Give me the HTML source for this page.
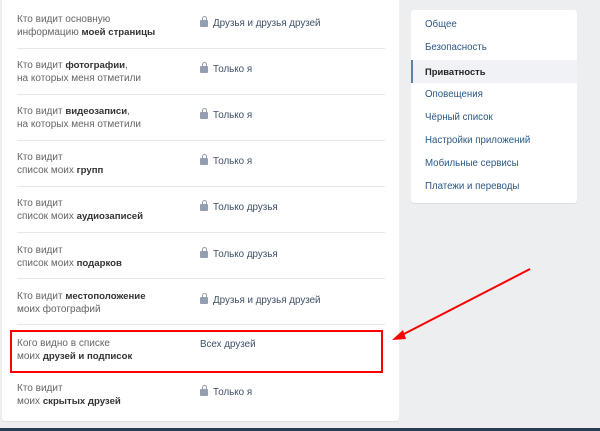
<!DOCTYPE html>
<html><head><meta charset="utf-8"><style>
*{margin:0;padding:0;box-sizing:border-box}
body{width:600px;height:431px;background:#edeef0;font-family:"Liberation Sans",Arial,sans-serif;font-size:10px;position:relative;overflow:hidden}
.card{position:absolute;left:2px;top:-5px;width:397px;height:426px;background:#fff;border-radius:0 0 3px 3px;box-shadow:0 1px 0 #dcdee2}
.row{position:absolute;left:17px;width:368px;height:46px}
.sep{position:absolute;left:17px;width:368px;height:1px;background:#e7e8ec}
.lab{position:absolute;left:0;top:7px;color:#656565;line-height:12.5px;font-size:10px}
.lab b{color:#333;font-weight:bold;font-size:9.6px}
.val{position:absolute;left:183px;top:11px;color:#3d4f66;white-space:nowrap;font-size:9.8px}
.lock{display:inline-block;width:8px;height:7px;background:#939eb0;border-radius:1px;position:relative;margin-right:5px;vertical-align:-1px}
.lock:before{content:"";position:absolute;left:1.5px;top:-4px;width:3px;height:4px;border:1px solid #939eb0;border-bottom:none;border-radius:3px 3px 0 0}
.menu{position:absolute;left:411px;top:10px;width:166px;height:193px;background:#fff;border-radius:3px;box-shadow:0 1px 0 #dcdee2}
.mi{position:absolute;left:14px;color:#2a5885;font-size:9.7px}
.act{position:absolute;left:0;top:50px;width:166px;height:23px;background:#f0f2f5;border-left:2px solid #5e81a8}
.bot{position:absolute;left:0;top:428px;width:600px;height:3px;background:#2b3d52}
</style></head><body>
<div class="card"></div>
<div class="row" style="top:7px"><div class="lab">Кто видит основную<br>информацию <b>моей страницы</b></div><div class="val"><span class="lock"></span>Друзья и друзья друзей</div></div>
<div class="sep" style="top:48px"></div>
<div class="row" style="top:53px"><div class="lab">Кто видит <b>фотографии</b>,<br>на которых меня отметили</div><div class="val"><span class="lock"></span>Только я</div></div>
<div class="sep" style="top:94px"></div>
<div class="row" style="top:99px"><div class="lab">Кто видит <b>видеозаписи</b>,<br>на которых меня отметили</div><div class="val"><span class="lock"></span>Только я</div></div>
<div class="sep" style="top:140px"></div>
<div class="row" style="top:145px"><div class="lab">Кто видит<br>список моих <b>групп</b></div><div class="val"><span class="lock"></span>Только я</div></div>
<div class="sep" style="top:186px"></div>
<div class="row" style="top:191px"><div class="lab">Кто видит<br>список моих <b>аудиозаписей</b></div><div class="val"><span class="lock"></span>Только друзья</div></div>
<div class="sep" style="top:232px"></div>
<div class="row" style="top:238px"><div class="lab">Кто видит<br>список моих <b>подарков</b></div><div class="val"><span class="lock"></span>Только друзья</div></div>
<div class="sep" style="top:278px"></div>
<div class="row" style="top:284px"><div class="lab">Кто видит <b>местоположение</b><br>моих фотографий</div><div class="val"><span class="lock"></span>Друзья и друзья друзей</div></div>
<div class="sep" style="top:324px"></div>
<div class="row" style="top:331px"><div class="lab">Кого видно в списке<br>моих <b>друзей и подписок</b></div><div class="val" style="left:183px;top:8px">Всех друзей</div></div>
<div style="position:absolute;left:10px;top:330px;width:373px;height:43px;border:2px solid #f00"></div>
<div class="row" style="top:376px"><div class="lab">Кто видит<br>моих <b>скрытых друзей</b></div><div class="val"><span class="lock"></span>Только я</div></div>
<div class="menu">
<div class="act"></div>
<div class="mi" style="top:9px">Общее</div>
<div class="mi" style="top:32px">Безопасность</div>
<div class="mi" style="top:56px;color:#222;font-weight:bold;font-size:9.4px">Приватность</div>
<div class="mi" style="top:79px">Оповещения</div>
<div class="mi" style="top:102px">Чёрный список</div>
<div class="mi" style="top:125px">Настройки приложений</div>
<div class="mi" style="top:148px">Мобильные сервисы</div>
<div class="mi" style="top:171px">Платежи и переводы</div>
</div>
<svg style="position:absolute;left:0;top:0" width="600" height="431"><line x1="530" y1="269" x2="400" y2="336" stroke="#f00" stroke-width="2"/><polygon points="392,340 403,330 406,339" fill="#f00"/></svg>
<div class="bot"></div>
</body></html>
